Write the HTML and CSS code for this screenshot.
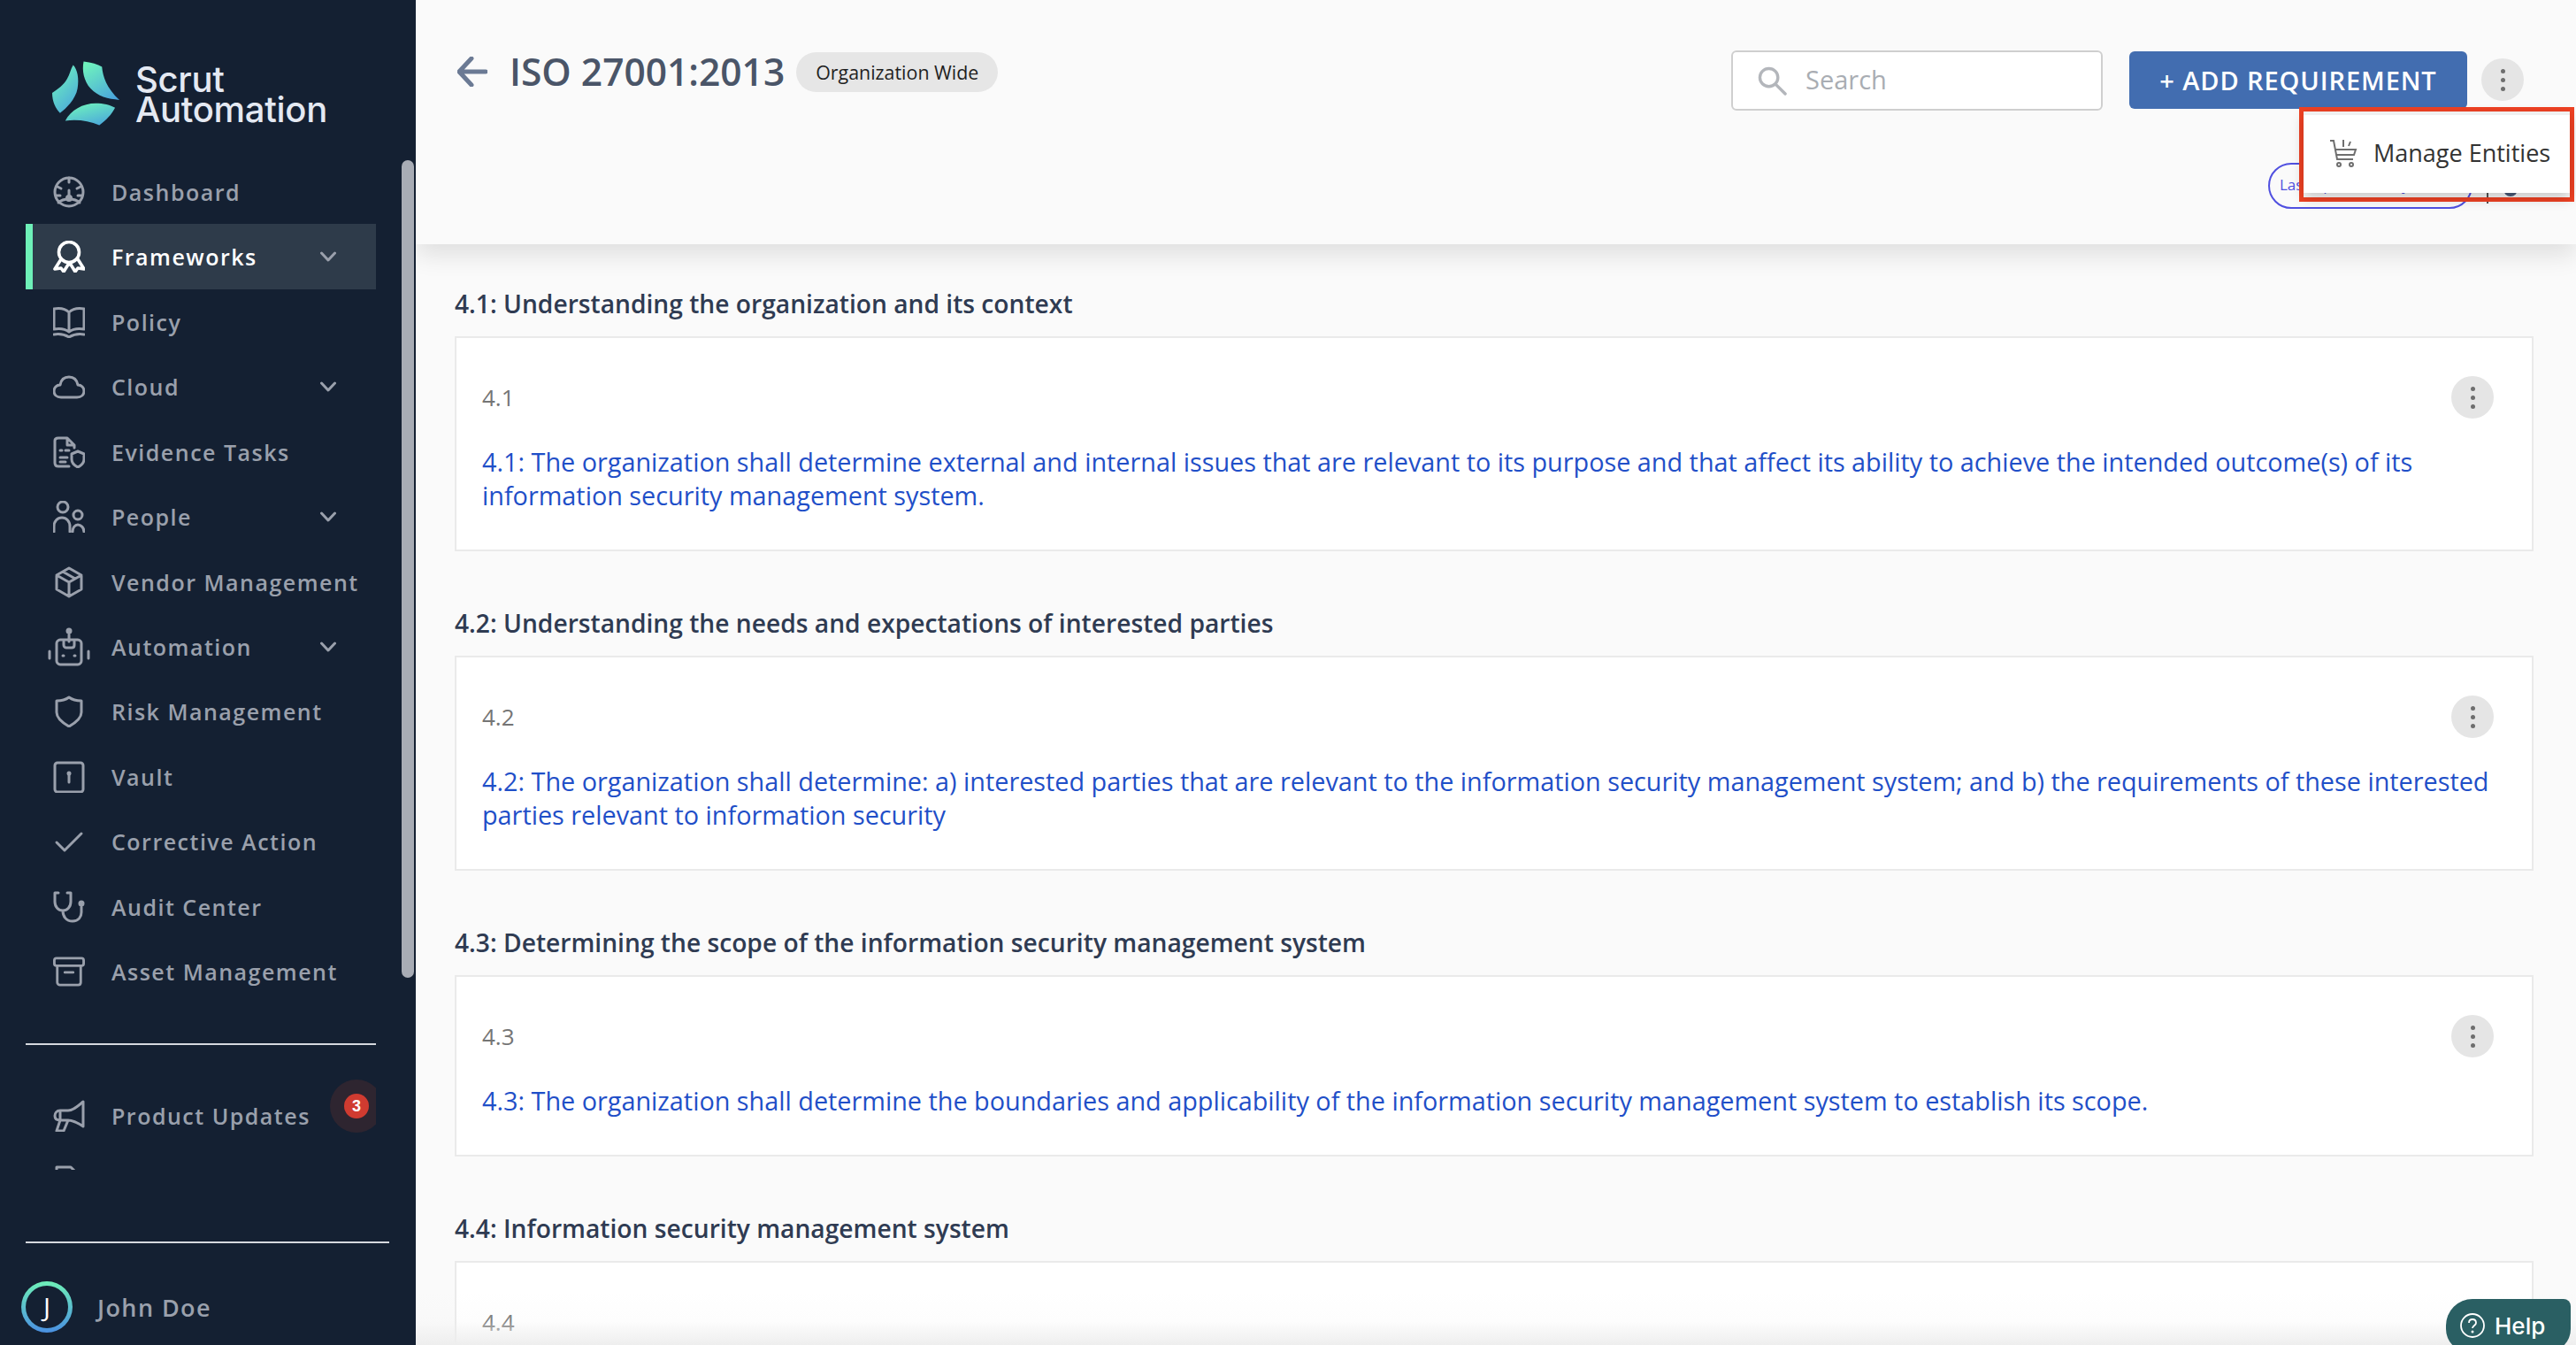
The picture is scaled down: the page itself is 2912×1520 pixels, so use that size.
FILE: index.html
```html
<!DOCTYPE html>
<html lang="en">
<head>
<meta charset="utf-8">
<title>ISO 27001:2013</title>
<link rel="stylesheet" href="styles.css">
</head>
<body>
<div class="app">
  <aside class="sidebar">
    <div class="brand">
      <svg class="brand-mark" viewBox="0 0 78 74">
        <defs>
          <linearGradient id="lg" x1="0.2" y1="0" x2="0.8" y2="1">
            <stop offset="0" stop-color="#6ff3bd"/><stop offset="1" stop-color="#4aa6dc"/>
          </linearGradient>
        </defs>
        <path fill="url(#lg)" d="M24 4 C29 9 31 20 29 31 C27 43 16 54 9 59 C4 54 0 46 0 36 C7 31 13 27 17 20 C20 15 21 9 24 4 Z"/>
        <path fill="url(#lg)" d="M36 0 C45 1 52 3 57 6 C58 17 62 30 77 44 C64 43 52 40 44 31 C36 22 34 10 36 0 Z"/>
        <path fill="url(#lg)" d="M15 68 C21 56 35 48 50 48 C58 48 67 50 72 53 C68 61 62 67 54 73 C42 68 28 66 15 68 Z"/>
      </svg>
      <div class="brand-name"><span>Scrut</span><span>Automation</span></div>
    </div>

    <nav class="nav">
      <a class="nav-item"><svg class="ico" viewBox="0 0 36 36"><circle cx="18" cy="18" r="16"/><path d="M18 2v5M5 12l4 2M31 12l-4 2M3 22h5M33 22h-5M18 16v8M6 30c3-3 7-4 12-4s9 1 12 4"/><circle cx="18" cy="25" r="2.5"/></svg><span>Dashboard</span></a>
      <a class="nav-item is-active"><svg class="ico ico-bold" viewBox="0 0 36 36"><circle cx="18" cy="13" r="11.500"/><path d="M9 21L2 32l7-1 3 4 5-8 3 0 5 8 3-4 7 1-7-11"/></svg><span>Frameworks</span><svg class="chev" viewBox="0 0 18 12"><path d="M1.500 2l7.500 8 7.500-8"/></svg></a>
      <a class="nav-item"><svg class="ico" viewBox="0 0 36 36"><path d="M18 7C14 3 7 2 1 3v23c6-1 13 0 17 3 4-3 11-4 17-3V3c-6-1-13 0-17 4zM18 7v22M1 32c6-1 12 0 17 3 5-3 11-4 17-3"/></svg><span>Policy</span></a>
      <a class="nav-item"><svg class="ico" viewBox="0 0 36 36"><path d="M9 30c-5 0-8-3-8-7 0-4 3-7 7-7 1-6 5-9 10-9 6 0 9 4 10 9 4 0 7 3 7 7s-3 7-8 7z"/></svg><span>Cloud</span><svg class="chev" viewBox="0 0 18 12"><path d="M1.500 2l7.500 8 7.500-8"/></svg></a>
      <a class="nav-item"><svg class="ico" viewBox="0 0 36 36"><path d="M18 34H6c-3 0-4-2-4-4V5c0-2 1-3 4-3h10l8 8v3M16 2v8h8M8 16h2M14 16h4M8 24h8M8 29h6M28 17l7 3v6c0 4-3 7-7 9-4-2-7-5-7-9v-6z"/></svg><span>Evidence Tasks</span></a>
      <a class="nav-item"><svg class="ico" viewBox="0 0 36 36"><circle cx="11" cy="7" r="6"/><circle cx="28" cy="16" r="5"/><path d="M1 35v-6c0-6 4-10 9-10s9 4 9 10v6M22 35c0-5 3-8 6-8s7 3 7 8"/></svg><span>People</span><svg class="chev" viewBox="0 0 18 12"><path d="M1.500 2l7.500 8 7.500-8"/></svg></a>
      <a class="nav-item"><svg class="ico" viewBox="0 0 36 36"><path d="M18 2l14 8v16l-14 8-14-8V10zM4 10l14 8 14-8M18 18v16M11 6l14 8"/></svg><span>Vendor Management</span></a>
      <a class="nav-item"><svg class="ico ico-wide" viewBox="0 0 48 44"><circle cx="24" cy="4" r="3.500" class="solid"/><path d="M24 8v8M18 16v4c0 2 2 3 3 3h6c2 0 3-1 3-3v-4M14 14h20c2 0 4 2 4 4v20c0 2-2 4-4 4H14c-2 0-4-2-4-4V18c0-2 2-4 4-4zM2 27v8M46 27v8M17 32h1M30 32h1"/></svg><span>Automation</span><svg class="chev" viewBox="0 0 18 12"><path d="M1.500 2l7.500 8 7.500-8"/></svg></a>
      <a class="nav-item"><svg class="ico" viewBox="0 0 36 36"><path d="M18 2c4 3 9 4 14 4v13c0 7-7 12-14 16C11 31 4 26 4 19V6c5 0 10-1 14-4z"/></svg><span>Risk Management</span></a>
      <a class="nav-item"><svg class="ico" viewBox="0 0 36 36"><rect x="2" y="2" width="32" height="33" rx="3"/><circle cx="18" cy="14" r="2.500" class="solid"/><path d="M18 15v9"/></svg><span>Vault</span></a>
      <a class="nav-item"><svg class="ico" viewBox="0 0 36 36"><path d="M4 19l9 9L32 9"/></svg><span>Corrective Action</span></a>
      <a class="nav-item"><svg class="ico" viewBox="0 0 36 36"><path d="M6 2H2v10c0 6 4 10 9 10s9-4 9-10V2h-4M11 22c0 7 4 12 11 12s10-5 10-10v-6"/><circle cx="32" cy="14" r="3.500" class="solid"/></svg><span>Audit Center</span></a>
      <a class="nav-item"><svg class="ico" viewBox="0 0 38 36"><rect x="1.500" y="2" width="35" height="9" rx="2.500"/><path d="M5 11v20c0 2 2 3 3 3h22c2 0 3-1 3-3V11M14 19h10"/></svg><span>Asset Management</span></a>
    </nav>

    <div class="nav-lower">
      <a class="nav-item"><svg class="ico" viewBox="0 0 36 36"><path d="M34 2v28c-6-4-11-7-17-7H8c-4 0-6-2-6-5s2-6 6-6h9c6 0 11-5 17-10zM8 23l-4 12h8l5-12M8 14v9"/></svg><span>Product Updates</span></a>
      <a class="nav-item"><svg class="ico" viewBox="0 0 36 36"><path d="M4 3h16l6 6v22H4z"/></svg><span></span></a>
      <div class="badge-halo"><span class="badge">3</span></div>
    </div>

    <div class="user">
      <div class="avatar"><span>J</span></div>
      <span class="user-name">John Doe</span>
    </div>

    <div class="side-scroll"></div>
  </aside>

  <main class="main">
    <header class="topbar">
      <div class="topbar-row">
        <div class="title-wrap">
          <svg class="back" viewBox="0 0 34 34"><path d="M32 17H3M16 2L2 17l14 15"/></svg>
          <h1 class="title">ISO 27001:2013</h1>
          <span class="scope">Organization Wide</span>
        </div>
        <div class="actions">
          <label class="search">
            <svg viewBox="0 0 34 34"><circle cx="13" cy="13" r="10.500"/><path d="M21 21l11 11"/></svg>
            <span>Search</span>
          </label>
          <button class="primary">+ ADD REQUIREMENT</button>
          <span class="kebab kebab-top"><i></i><i></i><i></i></span>
        </div>
      </div>
      <div class="topbar-sub">
        <span class="activity">Last Updated Only</span>
        <span class="sub-sep"></span>
        <span class="sub-dot"></span>
      </div>
    </header>

    <section class="list">
      <div class="group">
        <h2>4.1: Understanding the organization and its context</h2>
        <article class="card">
          <div class="card-head"><span class="num">4.1</span><span class="kebab"><i></i><i></i><i></i></span></div>
          <p>4.1: The organization shall determine external and internal issues that are relevant to its purpose and that affect its ability to achieve the intended outcome(s) of its information security management system.</p>
        </article>
      </div>
      <div class="group">
        <h2>4.2: Understanding the needs and expectations of interested parties</h2>
        <article class="card">
          <div class="card-head"><span class="num">4.2</span><span class="kebab"><i></i><i></i><i></i></span></div>
          <p>4.2: The organization shall determine: a) interested parties that are relevant to the information security management system; and b) the requirements of these interested parties relevant to information security</p>
        </article>
      </div>
      <div class="group">
        <h2>4.3: Determining the scope of the information security management system</h2>
        <article class="card">
          <div class="card-head"><span class="num">4.3</span><span class="kebab"><i></i><i></i><i></i></span></div>
          <p>4.3: The organization shall determine the boundaries and applicability of the information security management system to establish its scope.</p>
        </article>
      </div>
      <div class="group">
        <h2>4.4: Information security management system</h2>
        <article class="card">
          <div class="card-head"><span class="num">4.4</span></div>
        </article>
      </div>
    </section>

    <div class="annot">
      <div class="menu">
        <svg viewBox="0 0 32 32"><path d="M1 2h4l4 21h18M7 12h23l-2 6H8M16 1v8M24 3l-2 5"/><circle cx="11" cy="29" r="2"/><circle cx="25" cy="29" r="2"/></svg>
        <span>Manage Entities</span>
      </div>
    </div>

    <div class="fade"></div>
    <div class="help">
      <svg viewBox="0 0 28 28"><circle cx="14" cy="14" r="13"/><path d="M10 11c0-3 2-4 4-4s4 1 4 4c0 3-4 3-4 6"/><circle cx="14" cy="21" r=".6"/></svg>
      <span>Help</span>
    </div>
  </main>
</div>
</body>
</html>
```
FILE: styles.css
```css
* { box-sizing: border-box; }
html, body { margin: 0; height: 100%; }
body { font-family: "Open Sans", "Noto Sans", sans-serif; background: #fafafa; overflow: hidden; }

.app { display: flex; width: 2912px; height: 1520px; overflow: hidden; }

/* Sidebar */
.sidebar { position: relative; flex: 0 0 470px; height: 1520px; background: #142032; display: flex; flex-direction: column; overflow: hidden; }
.brand { height: 180px; padding: 69px 0 0 59px; display: flex; gap: 17px; align-items: flex-start; }
.brand-mark { width: 77px; height: 74px; flex: none; }
.brand-name { display: flex; flex-direction: column; font-family: Inter, sans-serif; font-weight: 500; font-size: 40px; line-height: 34px; color: #e4e9f2; margin-top: 4px; letter-spacing: -0.3px; }

.nav { height: 1001px; border-bottom: 2px solid #d5d8de; width: 396px; margin-left: 29px; }
.nav-item { display: flex; align-items: center; height: 73.4px; padding-left: 31px; color: #9aa0ac; font-size: 25px; font-weight: 600; letter-spacing: 1.500px; position: relative; }
.nav-item > span { margin-left: 30px; white-space: nowrap; }
.nav-item.is-active { background: #2e3b4a; color: #fff; border-left: 8px solid #6ef0b8; padding-left: 23px; height: 74px; }
.ico { width: 36px; height: 36px; flex: none; fill: none; stroke: currentColor; stroke-width: 3; stroke-linejoin: round; stroke-linecap: round; }
.ico-bold { stroke-width: 3.600; }
.ico-wide { width: 48px; height: 44px; margin: 0 -6px; }
.ico .solid { fill: currentColor; stroke: none; }
.chev { position: absolute; left: 333px; top: 50%; margin-top: -6px; width: 18px; height: 12px; fill: none; stroke: currentColor; stroke-width: 3; stroke-linecap: round; stroke-linejoin: round; }
.is-active .chev { left: 325px; color: #9aa0ac; }

.nav-lower { position: relative; width: 396px; margin-left: 29px; height: 141px; padding-top: 43px; overflow: hidden; flex: none; }
.badge-halo { position: absolute; left: 344px; top: 39px; width: 60px; height: 60px; border-radius: 50%; background: #2e2530; display: flex; align-items: center; justify-content: center; }
.badge { width: 28px; height: 28px; border-radius: 50%; background: #d03b30; color: #fff; font: 700 18px/28px "Liberation Sans", sans-serif; text-align: center; }

.user { margin: 81px 0 0 29px; width: 411px; border-top: 2px solid #d5d8de; display: flex; align-items: center; height: 116px; padding-top: 30px; }
.avatar { width: 58px; height: 58px; border-radius: 50%; background: linear-gradient(#6ef0b8, #4a90e2); margin-left: -5px; padding: 5px; flex: none; }
.avatar span { display: block; width: 48px; height: 48px; border-radius: 50%; background: #142032; color: #fff; font-size: 30px; line-height: 48px; text-align: center; }
.user-name { margin-left: 28px; color: #9aa0ac; font-size: 27px; font-weight: 600; letter-spacing: 1.400px; }

.side-scroll { position: absolute; left: 454px; top: 181px; width: 14px; height: 924px; border-radius: 8px; background: #a8acb5; }

/* Main */
.main { position: relative; flex: 1; height: 1520px; overflow: hidden; background: #fafafa; }
.topbar { position: relative; z-index: 1; height: 276px; background: #fafafa; box-shadow: 0 12px 26px rgba(0, 0, 0, .11); padding: 57px 0 0; }
.topbar-row { display: flex; justify-content: space-between; align-items: flex-start; }
.title-wrap { display: flex; align-items: center; margin-left: 47px; height: 48px; }
.back { width: 34px; height: 34px; fill: none; stroke: #6b7a94; stroke-width: 5; stroke-linecap: round; stroke-linejoin: round; flex: none; }
.title { margin: 0 0 0 25px; font-size: 42.500px; font-weight: 600; color: #4a5568; line-height: 48px; white-space: nowrap; }
.scope { margin-left: 13px; height: 45px; padding: 0 22px; border-radius: 23px; background: #e6e6e6; color: #1f1f1f; font-size: 21.400px; line-height: 45px; white-space: nowrap; }
.actions { display: flex; align-items: flex-start; margin-right: 59px; }
.search { display: flex; align-items: center; width: 420px; height: 68px; background: #fff; border: 2px solid #cfcfcf; border-radius: 6px; padding: 0 0 3px 28px; color: #a9adb3; font-size: 29px; }
.search svg { width: 33px; height: 33px; fill: none; stroke: #b3b6bb; stroke-width: 3.500; stroke-linecap: round; margin-top: 3px; }
.search span { margin-left: 21px; }
.primary { margin-left: 30px; width: 382px; height: 65px; border: 0; border-radius: 6px; background: #426db0; color: #fff; font: 600 29px/65px "Open Sans", sans-serif; letter-spacing: 0.900px; white-space: nowrap; padding: 0; margin-top: 1px; }
.kebab { display: flex; flex-direction: column; align-items: center; justify-content: center; gap: 5px; width: 48px; height: 48px; border-radius: 50%; background: #e5e5e5; flex: none; }
.kebab i { width: 5px; height: 5px; border-radius: 50%; background: #6e6e6e; }
.kebab-top { margin: 9px 0 0 16px; }
.topbar-sub { position: absolute; left: 2094px; top: 184px; display: flex; align-items: flex-start; }
.activity { width: 231px; height: 52px; border: 2px solid #5050e0; border-radius: 26px; color: #5050e0; font-size: 17px; line-height: 26px; padding: 10px 0 0 11px; white-space: nowrap; overflow: hidden; }
.sub-sep { width: 2px; height: 20px; background: #555; margin: 26px 0 0 16px; }
.sub-dot { width: 16px; height: 16px; border-radius: 50%; background: #4a5a78; margin: 22px 0 0 17px; }

.list { padding: 49px 48px 0 44px; }
.group { margin-bottom: 63px; }
.group h2 { margin: 0; font-size: 28.200px; font-weight: 600; line-height: 36px; height: 55px; color: #2f3b52; white-space: nowrap; }
.card { background: #fff; border: 2px solid #eaeaea; padding: 0 45px 0 29px; min-height: 205px; }
.card-head { display: flex; align-items: center; justify-content: space-between; height: 48px; margin: 43px -2px 0 0; }
.num { color: #757575; font-size: 26px; }
.card p { margin: 30px 0 0; padding-bottom: 42px; color: #1f4fc8; font-size: 28.800px; line-height: 38px; }

/* Overlays */
.annot { position: absolute; z-index: 3; left: 2129px; top: 121px; width: 311px; height: 107px; border: 5px solid #ee4123; }
.menu { display: flex; align-items: center; height: 92px; background: #fff; border-top: 4px solid #f0f0f0; box-shadow: 0 6px 14px rgba(0, 0, 0, .2); padding: 0 0 3px 29px; }
.menu svg { width: 32px; height: 32px; fill: none; stroke: #6e6e6e; stroke-width: 2; flex: none; }
.menu span { margin-left: 18px; color: #333; font-size: 27px; white-space: nowrap; }

.fade { position: absolute; z-index: 2; left: 0; right: 0; bottom: 0; height: 60px; background: linear-gradient(rgba(238, 238, 238, 0), rgba(238, 238, 238, .12) 55%, rgba(238, 238, 238, 1)); }
.help { position: absolute; z-index: 4; left: 2295px; top: 1468px; width: 141px; height: 60px; background: #2a5f63; border-radius: 30px 8px 26px 26px; color: #fff; display: flex; align-items: flex-start; padding: 16px 0 0 16px; font: 500 26px/30px Inter, sans-serif; }
.help svg { width: 28px; height: 28px; fill: none; stroke: #fff; stroke-width: 1.800; margin-right: 12px; margin-right: 11px; }
```
